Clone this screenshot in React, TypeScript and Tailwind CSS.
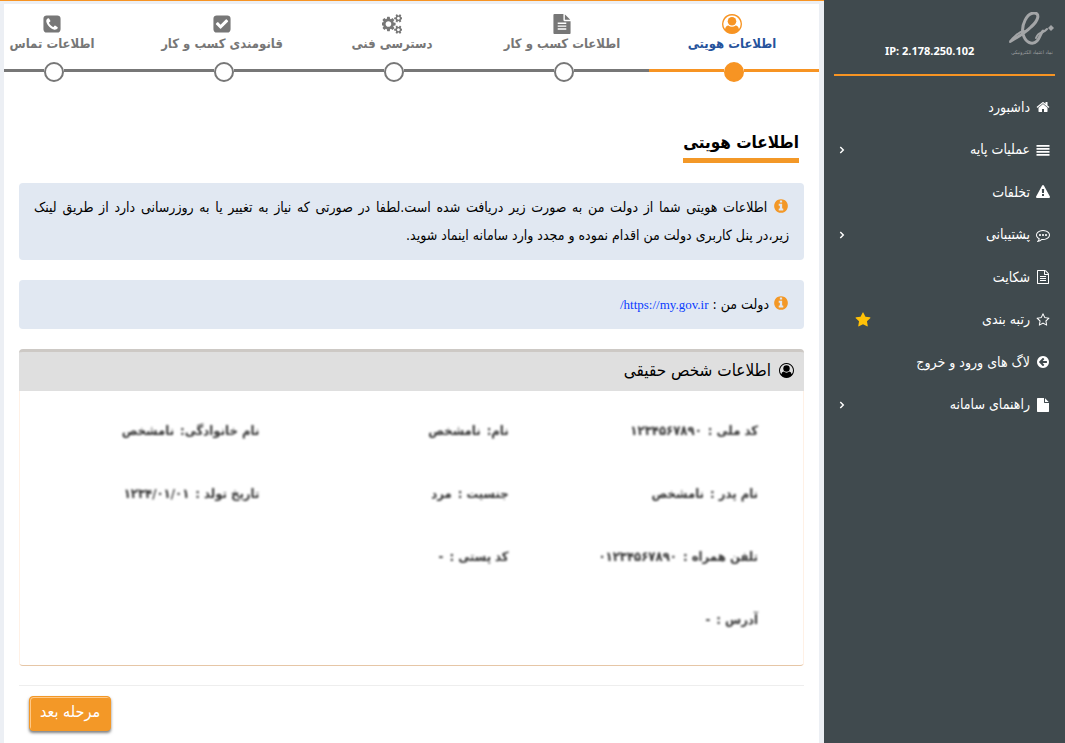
import React from 'react';

type IconName =
  | 'home'
  | 'lines'
  | 'warning'
  | 'comment'
  | 'fileTextOutline'
  | 'starOutline'
  | 'star'
  | 'arrowLeft'
  | 'file'
  | 'fileText'
  | 'info'
  | 'checkSquare'
  | 'phoneSquare'
  | 'cogs'
  | 'user'
  | 'chevron';

const disc =
  'M1664 896q0 209-103 385.500t-279.500 279.500-385.500 103-385.500-103-279.500-279.500-103-385.500 103-385.500 279.500-279.500 385.500-103 385.500 103 279.500 279.500 103 385.500z';
const square =
  'M1664 416v960q0 119-84.500 203.500t-203.500 84.500h-960q-119 0-203.500-84.500t-84.500-203.500v-960q0-119 84.500-203.500t203.500-84.500h960q119 0 203.500 84.500t84.500 203.500z';
const starShape =
  'M1728 647q0 22-26 48l-363 354 86 500q1 7 1 20 0 21-10.500 35.500t-30.500 14.500q-19 0-40-12l-449-236-449 236q-22 12-40 12-21 0-31.500-14.500t-10.500-35.500q0-6 2-20l86-500-364-354q-25-27-25-48 0-37 56-46l502-73 225-455q19-41 49-41t49 41l225 455 502 73q56 9 56 46z';

const paths: Record<Exclude<IconName, 'user'>, string> = {
  home: 'M1472 992v480q0 26-19 45t-45 19h-384v-384h-256v384h-384q-26 0-45-19t-19-45v-480q0-1 .5-3t.5-3l575-474 575 474q1 2 1 6zm223-69l-62 74q-8 9-21 11h-3q-13 0-21-7l-692-577-692 577q-12 8-24 7-13-2-21-11l-62-74q-8-10-7-23.500t11-21.500l719-599q32-26 76-26t76 26l244 204v-195q0-14 9-23t23-9h192q14 0 23 9t9 23v408l219 182q10 8 11 21.500t-7 23.500z',
  lines: 'M64 256h1664v224H64zM64 640h1664v224H64zM64 1024h1664v224H64zM64 1408h1664v224H64z',
  warning:
    'M1024 1375v-190q0-14-9.500-23.500t-22.500-9.500h-192q-13 0-22.500 9.500t-9.500 23.500v190q0 14 9.500 23.500t22.500 9.500h192q13 0 22.500-9.500t9.500-23.500zm-2-374l18-459q0-12-10-19-13-11-24-11h-220q-11 0-24 11-10 7-10 21l17 457q0 10 10 16.500t24 6.500h185q14 0 23.500-6.500t10.500-16.500zm-14-934l768 1408q35 63-2 126-17 29-46.500 46t-63.500 17h-1536q-34 0-63.500-17t-46.500-46q-37-63-2-126l768-1408q17-31 47-49t65-18 65 18 47 49z',
  comment:
    'M640 896q0 53-37.500 90.500t-90.500 37.500-90.500-37.500-37.500-90.500 37.500-90.500 90.500-37.500 90.500 37.500 37.500 90.500zm384 0q0 53-37.500 90.500t-90.500 37.500-90.500-37.500-37.500-90.500 37.500-90.500 90.500-37.500 90.500 37.500 37.500 90.500zm384 0q0 53-37.500 90.500t-90.500 37.500-90.500-37.500-37.500-90.500 37.500-90.500 90.500-37.500 90.500 37.500 37.500 90.500zm-512-512q-204 0-381.500 69.500t-282 187.500-104.500 255q0 112 71.500 213.500t201.500 175.500l87 50-27 96q-24 91-70 172 152-63 275-171l43-38 57 6q69 8 130 8 204 0 381.500-69.500t282-187.500 104.500-255-104.500-255-282-187.500-381.500-69.500zm896 512q0 174-120 321.500t-326 233-450 85.500q-70 0-145-8-198 175-460 242-49 14-114 22h-5q-15 0-27-10.500t-16-27.500v-1q-3-4-.5-12t2-10 4.500-9.500l6-9 7-8.500 8-9q7-8 31-34.500t34.500-38 31-39.500 32.500-51 27-59 26-76q-157-89-247.500-220t-90.500-281q0-174 120-321.500t326-233 450-85.500 450 85.500 326 233 120 321.500z',
  fileTextOutline:
    'M1596 380q28 28 48 76t20 88v1152q0 40-28 68t-68 28h-1344q-40 0-68-28t-28-68v-1600q0-40 28-68t68-28h896q40 0 88 20t76 48zm-444-244v376h376q-10-29-22-41l-313-313q-12-12-41-22zm384 1528v-1024h-416q-40 0-68-28t-28-68v-416h-768v1536h1280zM512 768h768v128h-768zM512 1024h768v128h-768zM512 1280h768v128h-768z',
  starOutline: 'M1201 1004l306-297-422-62-189-382-189 382-422 62 306 297-73 421 378-199 377 199z' + starShape,
  star: starShape,
  arrowLeft:
    'M1408 960v-128q0-26-19-45t-45-19h-502l189-189q19-19 19-45t-19-45l-91-91q-18-18-45-18t-45 18l-362 362-91 91q-18 18-18 45t18 45l91 91 362 362q18 18 45 18t45-18l91-91q18-18 18-45t-18-45l-189-189h502q26 0 45-19t19-45z' + disc,
  file: 'M1152 512v-472q22 14 36 28l408 408q14 14 28 36h-472zm-128 32q0 40 28 68t68 28h544v1056q0 40-28 68t-68 28h-1344q-40 0-68-28t-28-68v-1600q0-40 28-68t68-28h800v544z',
  fileText:
    'M1596 476q14 14 28 36h-472v-472q22 14 36 28zm-476 164h544v1056q0 40-28 68t-68 28h-1344q-40 0-68-28t-28-68v-1600q0-40 28-68t68-28h800v544q0 40 28 68t68 28zM512 768h768v128h-768zM512 1024h768v128h-768zM512 1280h768v128h-768z',
  info: 'M1152 1376v-160q0-14-9-23t-23-9h-96v-512q0-14-9-23t-23-9h-320q-14 0-23 9t-9 23v160q0 14 9 23t23 9h96v320h-96q-14 0-23 9t-9 23v160q0 14 9 23t23 9h448q14 0 23-9t9-23zm-128-896v-160q0-14-9-23t-23-9h-192q-14 0-23 9t-9 23v160q0 14 9 23t23 9h192q14 0 23-9t9-23z' + disc,
  checkSquare:
    'M813 1299l614-614q19-19 19-45t-19-45l-102-102q-19-19-45-19t-45 19l-467 467-211-211q-19-19-45-19t-45 19l-102 102q-19 19-19 45t19 45l358 358q19 19 45 19t45-19z' + square,
  phoneSquare:
    'M1408 1193q0-11-2-16t-18-16.500-40.500-25-47.500-26.500-45.500-25-28.500-15q-5-3-19-13t-25-15-21-5q-15 0-36.500 20.500t-39.500 45-38.500 45-33.500 20.500q-7 0-16.500-3.500t-15.500-6.500-17-9.500-14-8.500q-99-55-170-126.500t-127-170.500q-2-3-8.500-14t-9.500-17-6.500-15.500-3.500-16.500q0-13 20.500-33.500t45-38.500 45-39.500 20.500-36.500q0-10-5-21t-15-25-13-19q-3-6-15-28.500t-25-45.500-26.500-47.500-25-40.500-16.500-18-16-2q-48 0-101 22-46 21-80 94.500t-34 130.500q0 16 2.500 34t5 30.500 9 33 10 29.500 12.500 33 11 30q60 164 216.500 320.500t320.500 216.500q6 2 30 11t33 12.500 29.500 10 33 9 30.500 5 34 2.500q57 0 130.500-34t94.500-80q22-53 22-101z' + square,
  cogs: 'M832 896q0-106-75-181t-181-75-181 75-75 181 75 181 181 75 181-75 75-181zm768 512q0-52-38-90t-90-38-90 38-38 90q0 53 37.500 90.500t90.500 37.500 90.500-37.500 37.500-90.500zm0-1024q0-52-38-90t-90-38-90 38-38 90q0 53 37.500 90.500t90.500 37.500 90.500-37.500 37.500-90.500zm-384 421v185q0 10-7 19.500t-16 10.500l-155 24q-11 35-32 76 34 48 90 115 7 11 7 20 0 12-7 19-23 30-82.500 89.500t-78.500 59.500q-11 0-21-7l-115-90q-37 19-77 31-11 108-23 155-7 24-30 24h-186q-11 0-20-7.500t-10-17.500l-23-153q-34-10-75-31l-118 89q-7 7-20 7-11 0-21-8-144-133-144-160 0-9 7-19 10-14 41-53t47-61q-23-44-35-82l-152-24q-10-1-17-9.500t-7-19.500v-185q0-10 7-19.500t16-10.500l155-24q11-35 32-76-34-48-90-115-7-11-7-20 0-12 7-20 22-30 82-89t79-59q11 0 21 7l115 90q34-18 77-32 11-108 23-154 7-24 30-24h186q11 0 20 7.500t10 17.500l23 153q34 10 75 31l118-89q8-7 20-7 11 0 21 8 144 133 144 160 0 8-7 19-12 16-42 54t-45 60q23 48 34 82l152 23q10 2 17 10.500t7 19.500zm640 533v140q0 16-149 31-12 27-30 52 51 113 51 138 0 4-4 7-122 71-124 71-8 0-46-47t-52-68q-20 2-30 2t-30-2q-14 21-52 68t-46 47q-2 0-124-71-4-3-4-7 0-25 51-138-18-25-30-52-149-15-149-31v-140q0-16 149-31 13-29 30-52-51-113-51-138 0-4 4-7 4-2 35-20t59-34 30-16q8 0 46 46.500t52 67.500q20-2 30-2t30 2q51-71 92-112l6-2q4 0 124 70 4 3 4 7 0 25-51 138 17 23 30 52 149 15 149 31zm0-1024v140q0 16-149 31-12 27-30 52 51 113 51 138 0 4-4 7-122 71-124 71-8 0-46-47t-52-68q-20 2-30 2t-30-2q-14 21-52 68t-46 47q-2 0-124-71-4-3-4-7 0-25 51-138-18-25-30-52-149-15-149-31v-140q0-16 149-31 13-29 30-52-51-113-51-138 0-4 4-7 4-2 35-20t59-34 30-16q8 0 46 46.500t52 67.500q20-2 30-2t30 2q51-71 92-112l6-2q4 0 124 70 4 3 4 7 0 25-51 138 17 23 30 52 149 15 149 31z',
  chevron: 'M640 448l448 448-448 448',
};

interface IconProps {
  name: IconName;
  className?: string;
}

const Icon: React.FC<IconProps> = ({ name, className = 'size-[14px]' }) => (
  <svg viewBox="0 0 1792 1792" className={`shrink-0 ${className}`} fill="currentColor" aria-hidden="true">
    {name === 'chevron' ? (
      <path d={paths.chevron} fill="none" stroke="currentColor" strokeWidth="220" />
    ) : name === 'user' ? (
      <>
        <path
          d="M896 0a896 896 0 1 0 .1 0zM896 128a768 768 0 0 1 619 1222q-60-322-298-326-130 128-321 128t-321-128q-238 4-298 326a768 768 0 0 1 619-1222z"
          fillRule="evenodd"
        />
        <circle cx="896" cy="656" r="384" />
      </>
    ) : (
      <path d={paths[name]} fillRule="evenodd" />
    )}
  </svg>
);

interface MenuItem {
  label: string;
  icon: IconName;
  expandable?: boolean;
  starred?: boolean;
}

const menu: MenuItem[] = [
  { label: 'داشبورد', icon: 'home' },
  { label: 'عملیات پایه', icon: 'lines', expandable: true },
  { label: 'تخلفات', icon: 'warning' },
  { label: 'پشتیبانی', icon: 'comment', expandable: true },
  { label: 'شکایت', icon: 'fileTextOutline' },
  { label: 'رتبه بندی', icon: 'starOutline', starred: true },
  { label: 'لاگ های ورود و خروج', icon: 'arrowLeft' },
  { label: 'راهنمای سامانه', icon: 'file', expandable: true },
];

const steps: { label: string; icon: IconName }[] = [
  { label: 'اطلاعات هویتی', icon: 'user' },
  { label: 'اطلاعات کسب و کار', icon: 'fileText' },
  { label: 'دسترسی فنی', icon: 'cogs' },
  { label: 'قانومندی کسب و کار', icon: 'checkSquare' },
  { label: 'اطلاعات تماس', icon: 'phoneSquare' },
];

// placeholder values, shown masked
const fields = [
  { label: 'کد ملی :', value: '۱۲۳۴۵۶۷۸۹۰' },
  { label: 'نام:', value: 'نامشخص' },
  { label: 'نام خانوادگی:', value: 'نامشخص' },
  { label: 'نام پدر :', value: 'نامشخص' },
  { label: 'جنسیت :', value: 'مرد' },
  { label: 'تاریخ تولد :', value: '۱۲۳۴/۰۱/۰۱' },
  { label: 'تلفن همراه :', value: '۰۱۲۳۴۵۶۷۸۹۰' },
  { label: 'کد پستی :', value: '-' },
  { label: '', value: '' },
  { label: 'آدرس :', value: '-' },
];

const Logo: React.FC = () => (
  <svg viewBox="0 0 46 44" className="h-11 w-[46px] text-[#a3a5a7]" fill="none" stroke="currentColor" aria-hidden="true">
    <path d="M2 29C9 25 17 20 22 15C30 8 31 1 25 1C18 1 12 13 14 22C16 30 23 34 28 29C31 26 31 22 34 19" strokeWidth="3" strokeLinecap="round" />
    <path d="M15 19C10 20 4 25 1 30M27 26C30 18 33 23 38 17" strokeWidth="2" strokeLinecap="round" />
    <path d="M42 13l3 3-3 3-3-3z" fill="currentColor" stroke="none" />
    <text x="23" y="42" textAnchor="middle" fill="currentColor" stroke="none" fontSize="5">
      نماد اعتماد الکترونیکی
    </text>
  </svg>
);

const Sidebar: React.FC = () => (
  <aside className="w-[241px] shrink-0 bg-[#404a4e] text-white">
    <div className="mx-2.5 flex h-[76px] items-start justify-between border-b-2 border-[#f79423] pt-3">
      <Logo />
      <div dir="ltr" className="flex-1 pt-8 pl-[51px] font-['Noto_Sans','Open_Sans',sans-serif] text-[11px] leading-[14px] font-bold">
        IP: 2.178.250.102
      </div>
    </div>
    <ul className="mt-2.5 grid h-[340px] auto-rows-fr">
      {menu.map((item) => (
        <li key={item.label}>
          <a href="#" className="flex h-full items-center gap-1.5 pr-[15px] pl-3 text-[14px]">
            <Icon name={item.icon} />
            <span className="flex-1">{item.label}</span>
            {item.starred && <Icon name="star" className="ml-[19px] size-4 text-[#ffc107]" />}
            {item.expandable && <Icon name="chevron" className="size-3" />}
          </a>
        </li>
      ))}
    </ul>
  </aside>
);

const Stepper: React.FC = () => (
  <ol className="flex overflow-hidden pt-2.5">
    {steps.map((step, index) => {
      const active = index === 0;
      const line = `mt-[7px] h-[3px] flex-1 ${active ? 'bg-[#f79423]' : 'bg-[#777]'}`;
      return (
        <li key={step.label} className="w-[170px] shrink-0">
          <a href="#" className="flex flex-col items-center pr-1">
            <Icon name={step.icon} className={active ? 'size-5 text-[#f79423]' : 'size-5 text-[#777]'} />
            <span className={`text-[13px] leading-5 font-bold whitespace-nowrap ${active ? 'text-[#26539c]' : 'text-[#777]'}`}>
              {step.label}
            </span>
          </a>
          <div className="mt-2 flex items-start">
            <span className={line} />
            <span className={`size-5 rounded-full border-2 ${active ? 'border-[#f79423] bg-[#f79423]' : 'border-[#777] bg-white'}`} />
            <span className={line} />
          </div>
        </li>
      );
    })}
  </ol>
);

const Notice: React.FC<{ children: React.ReactNode }> = ({ children }) => (
  <div className="mt-5 rounded bg-[#e1e8f2] px-[15px] pt-2.5 pb-[11px] text-justify text-[14px] leading-7 text-black">
    <Icon name="info" className="inline-block size-4 align-[-2px] text-[#f39827]" /> {children}
  </div>
);

const App: React.FC = () => {
  return (
    <div dir="rtl" className="flex min-h-screen bg-[#eceff4] font-['DejaVu_Sans_Condensed','DejaVu_Sans',sans-serif]">
      <Sidebar />
      <div className="flex min-w-0 flex-1 flex-col border-t border-[#f79423] pt-[3px] pr-[5px] pl-1">
        <main className="flex-1 bg-white pb-3">
          <Stepper />
          <div className="px-[15px] pt-[46px]">
            <h1 className="mr-[5px] w-fit border-b-[5px] border-[#f39827] pb-0.5 text-[17px] leading-7 font-bold text-black">
              اطلاعات هویتی
            </h1>
            <Notice>
              اطلاعات هویتی شما از دولت من به صورت زیر دریافت شده است.لطفا در صورتی که نیاز به تغییر یا به روزرسانی دارد از طریق لینک{' '}
              <span className="whitespace-nowrap">زیر،در پنل</span> کاربری دولت من اقدام نموده و مجدد وارد سامانه اینماد شوید.
            </Notice>
            <Notice>
              دولت من :{' '}
              <a href="https://my.gov.ir/" className="font-['Liberation_Serif','Times_New_Roman',serif] text-[13px] leading-none text-[#0a3cff]">
                https://my.gov.ir/
              </a>
            </Notice>

            <section className="mt-5 rounded-b border-b border-[#e6c6a6]">
              <h2 className="flex h-[42px] items-center gap-2 rounded-t-sm border-t-[3px] border-[#cdc9c5] bg-[#dfdfdf] pr-2.5 pb-0.5 text-[17px] text-black">
                <Icon name="user" className="size-[15px]" />
                اطلاعات شخص حقیقی
              </h2>
              <dl className="grid auto-rows-[63px] grid-cols-3 items-center border-x border-[#fff1e6] pt-2 pr-[35px] pb-3.5 text-[13px] font-bold text-[#333]">
                {fields.map((field, index) => (
                  <div key={index} className="flex gap-1.5 pr-2.5 blur-[1px]">
                    <dt>{field.label}</dt>
                    <dd>{field.value}</dd>
                  </div>
                ))}
              </dl>
            </section>

            <div className="mt-[19px] flex justify-end border-t border-[#eee] pt-2.5 pl-2.5">
              <button
                type="button"
                className="h-[35px] rounded-sm border border-[#f39827] bg-[#f39827] px-2.5 pb-1 text-[16px] text-white shadow-[0_2px_3px_rgba(0,0,0,0.5),inset_1px_1px_0_#ffc987]"
              >
                مرحله بعد
              </button>
            </div>
          </div>
        </main>
      </div>
    </div>
  );
};

export default App;
